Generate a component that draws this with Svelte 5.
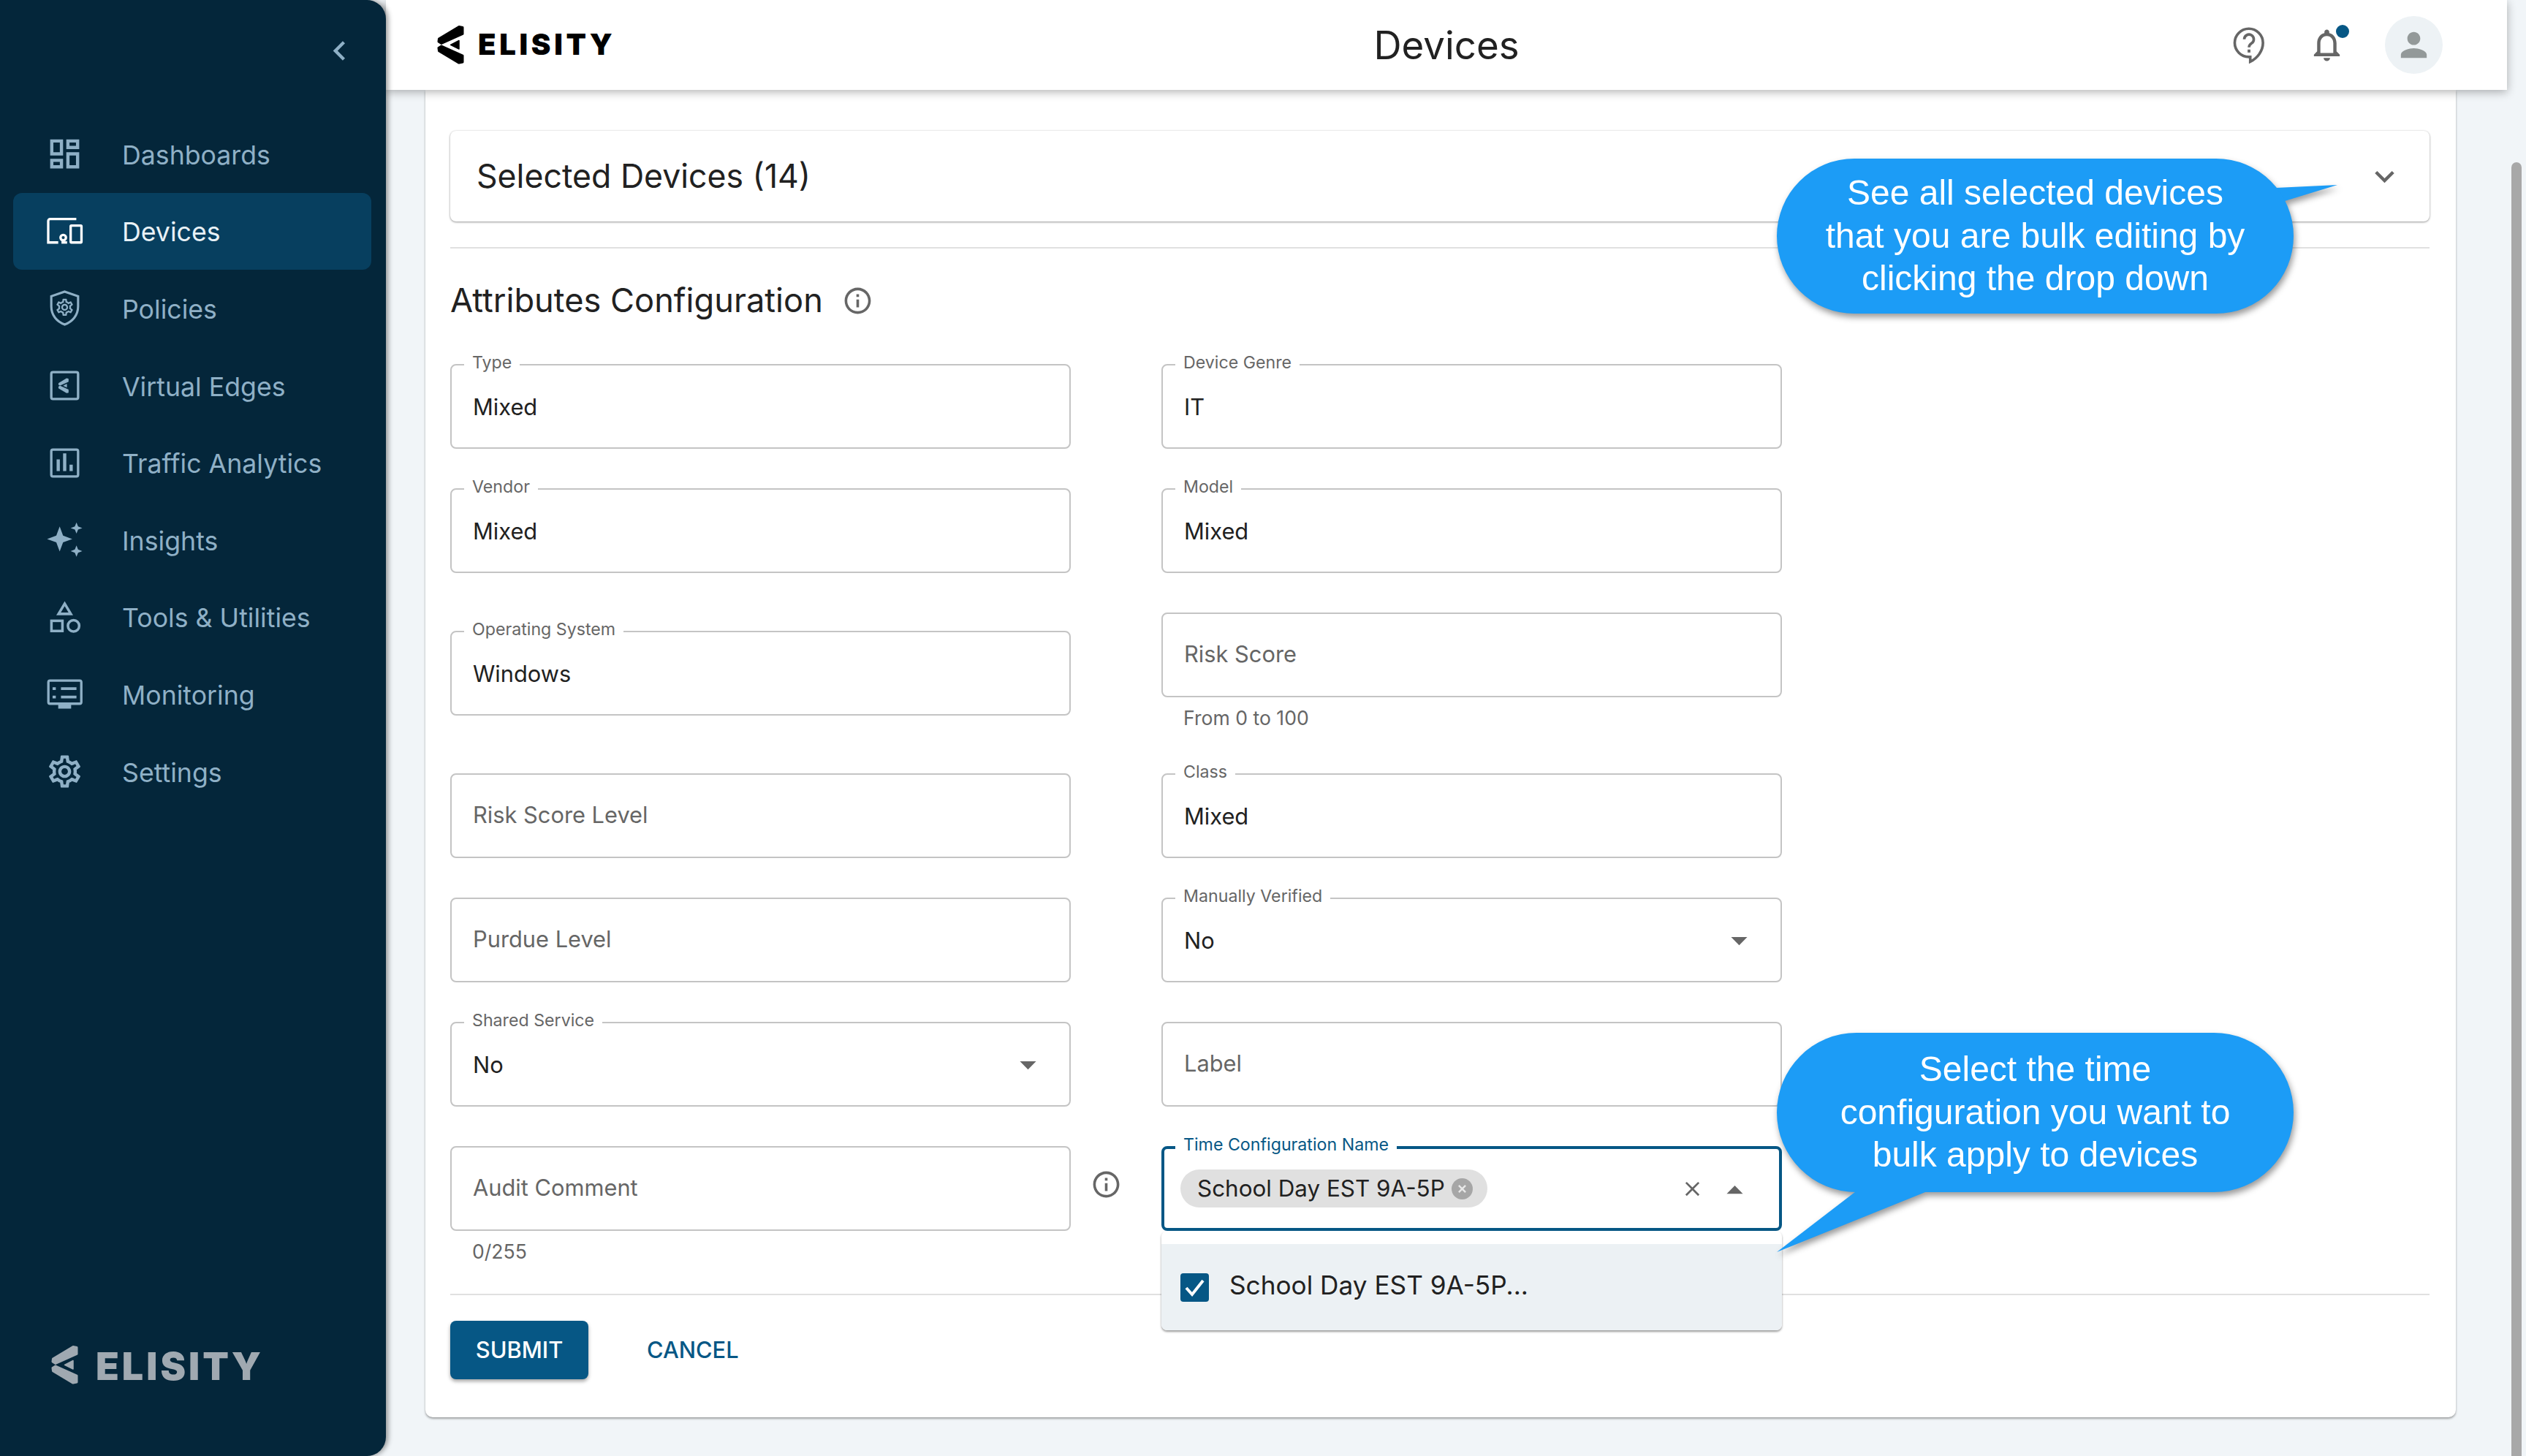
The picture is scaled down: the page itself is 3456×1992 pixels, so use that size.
<script>
  const settingsPath =
    "M19.43 12.98c.04-.32.07-.64.07-.98s-.03-.66-.07-.98l2.11-1.65c.19-.15.24-.42.12-.64l-2-3.46c-.12-.22-.39-.3-.61-.22l-2.49 1c-.52-.4-1.08-.73-1.69-.98l-.38-2.65C14.46 2.18 14.25 2 14 2h-4c-.25 0-.46.18-.49.42l-.38 2.65c-.61.25-1.17.59-1.69.98l-2.49-1c-.23-.09-.49 0-.61.22l-2 3.46c-.13.22-.07.49.12.64l2.11 1.65c-.04.32-.07.65-.07.98s.03.66.07.98l-2.11 1.65c-.19.15-.24.42-.12.64l2 3.46c.12.22.39.3.61.22l2.49-1c.52.4 1.08.73 1.69.98l.38 2.65c.03.24.24.42.49.42h4c.25 0 .46-.18.49-.42l.38-2.65c.61-.25 1.17-.59 1.69-.98l2.49 1c.23.09.49 0 .61-.22l2-3.46c.12-.22.07-.49-.12-.64l-2.11-1.65zm-1.98-1.71c.04.31.05.52.05.73 0 .21-.02.43-.05.73l-.14 1.13.89.7 1.08.84-.7 1.21-1.27-.51-1.04-.42-.9.68c-.43.32-.84.56-1.25.73l-1.06.43-.16 1.13-.2 1.35h-1.4l-.19-1.35-.16-1.13-1.06-.43c-.43-.18-.83-.41-1.23-.71l-.91-.7-1.06.43-1.27.51-.7-1.21 1.08-.84.89-.7-.14-1.13c-.03-.31-.05-.54-.05-.74s.02-.43.05-.73l.14-1.13-.89-.7-1.08-.84.7-1.21 1.27.51 1.04.42.9-.68c.43-.32.84-.56 1.25-.73l1.06-.43.16-1.13.2-1.35h1.39l.19 1.35.16 1.13 1.06.43c.43.18.83.41 1.23.71l.91.7 1.06-.43 1.27-.51.7 1.21-1.07.85-.89.7.14 1.13zM12 8c-2.21 0-4 1.79-4 4s1.79 4 4 4 4-1.79 4-4-1.79-4-4-4zm0 6c-1.1 0-2-.9-2-2s.9-2 2-2 2 .9 2 2-.9 2-2 2z";

  // the two wedge arms and the small triangle of the Elisity mark
  const logoMark = `<path d="M2.500 19L30 2.500L35 3.500V12.500L6 25.500L2 23ZM2.500 35.600L30 52.100L35 51.100V42.100L6 29.100L2 31.600Z" fill="currentColor" stroke="currentColor" stroke-width="3" stroke-linejoin="round"/><path d="M18.500 27.300L30 21.500V33Z" fill="currentColor" stroke="currentColor" stroke-width="1.500" stroke-linejoin="round"/>`;

  const nav = [
    {
      name: "Dashboards",
      icon: `<path fill="currentColor" d="M19 5v2h-4V5h4M9 5v6H5V5h4m10 8v6h-4v-6h4M9 17v2H5v-2h4M21 3h-8v6h8V3zM11 3H3v10h8V3zm10 8h-8v10h8V11zm-10 4H3v6h8v-6z"/>`
    },
    {
      name: "Devices",
      active: true,
      icon: `<g fill="none" stroke="currentColor" stroke-width="1.500"><path d="M19.200 4.400H3a1.200 1.200 0 0 0-1.200 1.200V18.900H8"/><circle cx="11.100" cy="15.900" r="1.700"/><path d="M10 18.900h3.500"/><rect x="15.700" y="8.400" width="6.700" height="10.500" rx=".4"/></g>`
    },
    {
      name: "Policies",
      icon: `<path fill="none" stroke="currentColor" stroke-width="1.400" d="M12 1.800L20.300 4.700V11C20.300 16.500 16.800 20.400 12 22.200C7.200 20.400 3.700 16.500 3.700 11V4.700Z"/><path fill="currentColor" transform="translate(5.700 5.200) scale(.525)" d="${settingsPath}"/>`
    },
    {
      name: "Virtual Edges",
      icon: `<rect x="3.700" y="3.700" width="16.600" height="16.600" rx="1" fill="none" stroke="currentColor" stroke-width="1.500"/><g transform="translate(8 7.300) scale(.175)">${logoMark}</g>`
    },
    {
      name: "Traffic Analytics",
      icon: `<rect x="3.700" y="3.700" width="16.600" height="16.600" rx="1" fill="none" stroke="currentColor" stroke-width="1.500"/><path fill="currentColor" d="M7 9.700h2V17H7zm4-3.700h2v11h-2zm4 7h2v4h-2z"/>`
    },
    {
      name: "Insights",
      icon: `<path fill="currentColor" d="M8.900 3.700L11 9.400L16.700 11.500L11 13.600L8.900 19.300L6.800 13.600L1.100 11.500L6.800 9.400ZM19.300 1.200L20.300 3.700L22.900 4.700L20.300 5.700L19.300 8.200L18.300 5.700L15.700 4.700L18.300 3.700ZM19.300 15.500L20.300 18L22.900 19L20.300 20L19.300 22.500L18.300 20L15.700 19L18.300 18Z"/>`
    },
    {
      name: "Tools & Utilities",
      icon: `<g fill="none" stroke="currentColor" stroke-width="1.600"><path d="M12 3.600L15.800 9.900H8.200Z"/><rect x="3.800" y="14.200" width="6.800" height="6.300"/><circle cx="17.500" cy="17.300" r="3.500"/></g>`
    },
    {
      name: "Monitoring",
      icon: `<rect x="1.900" y="3.700" width="20.400" height="14.300" rx="1" fill="none" stroke="currentColor" stroke-width="1.500"/><path fill="currentColor" d="M8 18.500h8V21H8zM4.500 7.800h2v1.700h-2zm5.200 0h9.600v1.700H9.700zM4.500 13h2v1.700h-2zm5.200 0h9.600v1.700H9.700z"/>`
    },
    {
      name: "Settings",
      icon: `<path fill="currentColor" d="${settingsPath}"/>`
    }
  ];

  const rows = [
    [{ label: "Type", value: "Mixed" }, { label: "Device Genre", value: "IT" }],
    [{ label: "Vendor", value: "Mixed" }, { label: "Model", value: "Mixed" }],
    [{ label: "Operating System", value: "Windows" }, { placeholder: "Risk Score", helper: "From 0 to 100" }],
    [{ placeholder: "Risk Score Level" }, { label: "Class", value: "Mixed" }],
    [{ placeholder: "Purdue Level" }, { label: "Manually Verified", value: "No", select: true }],
    [{ label: "Shared Service", value: "No", select: true }, { placeholder: "Label" }]
  ];
</script>

{#snippet infoIcon()}
  <svg class="info" viewBox="0 0 24 24"><path d="M11 7h2v2h-2zm0 4h2v6h-2zm1-9C6.480 2 2 6.480 2 12s4.480 10 10 10 10-4.480 10-10S17.520 2 12 2zm0 18c-4.410 0-8-3.590-8-8s3.590-8 8-8 8 3.590 8 8-3.590 8-8 8z"/></svg>
{/snippet}

{#snippet field(f)}
  <div class="cell" class:with-helper={f.helper}>
    <div class="field">
      {#if f.label}<span class="label">{f.label}</span>{/if}
      {#if f.value}<span class="value">{f.value}</span>{/if}
      {#if f.placeholder}<span class="placeholder">{f.placeholder}</span>{/if}
      {#if f.select}
        <svg class="arrow" viewBox="0 0 24 24"><path d="M7 10l5 5 5-5z"/></svg>
      {/if}
    </div>
    {#if f.helper}<div class="helper">{f.helper}</div>{/if}
  </div>
{/snippet}

<div class="app">
  <aside class="sidebar">
    <button class="collapse" aria-label="Collapse">
      <svg viewBox="0 0 24 24"><path d="M15.410 7.410L14 6l-6 6 6 6 1.410-1.410L10.830 12z"/></svg>
    </button>
    <nav>
      {#each nav as item}
        <div class="nav-item" class:active={item.active}>
          <svg viewBox="0 0 24 24">{@html item.icon}</svg>
          <span>{item.name}</span>
        </div>
      {/each}
    </nav>
    <div class="side-logo">
      <svg viewBox="0 0 37 54">{@html logoMark}</svg>
      <span>ELISITY</span>
    </div>
  </aside>

  <div class="main">
    <header>
      <div class="top-logo">
        <svg viewBox="0 0 37 54">{@html logoMark}</svg>
        <span>ELISITY</span>
      </div>
      <h1>Devices</h1>
      <div class="top-actions">
        <svg class="help" viewBox="0 0 24 24">
          <g fill="none" stroke="currentColor" stroke-width="1.500">
            <path d="M11.500 3C7.100 3 3.500 6.600 3.500 11s3.600 8 8 8h.8v2.700c4-2 7.200-6 7.200-10.700C19.500 6.600 15.900 3 11.500 3z"/>
            <path d="M8.900 9a2.700 2.700 0 1 1 4.100 2.300c-.9.600-1.400 1.100-1.400 2.300"/>
          </g>
          <rect x="10.800" y="14.800" width="1.600" height="1.700" fill="currentColor"/>
        </svg>
        <div class="bell">
          <svg viewBox="0 0 24 24"><path d="M12 22c1.100 0 2-.9 2-2h-4c0 1.100.9 2 2 2zm6-6v-5c0-3.070-1.630-5.640-4.500-6.320V4c0-.83-.67-1.500-1.500-1.500s-1.500.67-1.500 1.500v.68C7.640 5.360 6 7.920 6 11v5l-2 2v1h16v-1l-2-2zm-2 1H8v-6c0-2.480 1.510-4.500 4-4.500s4 2.020 4 4.500v6z"/></svg>
          <span class="dot"></span>
        </div>
        <div class="avatar">
          <svg viewBox="0 0 24 24"><path d="M12 12c2.210 0 4-1.790 4-4s-1.790-4-4-4-4 1.790-4 4 1.790 4 4 4zm0 2c-2.670 0-8 1.340-8 4v2h16v-2c0-2.660-5.330-4-8-4z"/></svg>
        </div>
      </div>
    </header>

    <div class="content">
      <section class="card">
        <div class="accordion">
          <span>Selected Devices (14)</span>
          <svg viewBox="0 0 24 24"><path d="M16.590 8.590L12 13.170 7.410 8.590 6 10l6 6 6-6z"/></svg>
        </div>
        <hr class="rule-top" />
        <h2>Attributes Configuration {@render infoIcon()}</h2>

        <div class="grid">
          {#each rows as row}
            {@render field(row[0])}
            {@render field(row[1])}
          {/each}

          <div class="cell with-helper start">
            <div class="field">
              <span class="placeholder">Audit Comment</span>
              <div class="audit-info">{@render infoIcon()}</div>
            </div>
            <div class="helper">0/255</div>
          </div>

          <div class="cell start">
            <div class="field focused">
              <span class="label">Time Configuration Name</span>
              <span class="chip">
                School Day EST 9A-5P
                <svg viewBox="0 0 24 24"><circle cx="12" cy="12" r="12"/><path d="M16.500 8.900L15.100 7.500 12 10.600 8.900 7.500 7.500 8.900 10.600 12 7.500 15.100 8.900 16.500 12 13.400 15.100 16.500 16.500 15.100 13.400 12z"/></svg>
              </span>
              <svg class="clear" viewBox="0 0 24 24"><path d="M19 6.410L17.590 5 12 10.590 6.410 5 5 6.410 10.590 12 5 17.590 6.410 19 12 13.410 17.590 19 19 17.590 13.410 12z"/></svg>
              <svg class="arrow up" viewBox="0 0 24 24"><path d="M7 15l5-5 5 5z"/></svg>
              <div class="menu">
                <div class="option">
                  <svg viewBox="0 0 39 39"><rect width="39" height="39" rx="4"/><path d="M8 20l8 9 15-19" fill="none" stroke="#fff" stroke-width="4"/></svg>
                  <span>School Day EST 9A-5P...</span>
                </div>
              </div>
            </div>
          </div>
        </div>

        <hr class="rule-bottom" />
        <div class="actions">
          <button class="submit">SUBMIT</button>
          <button class="cancel">CANCEL</button>
        </div>
      </section>
    </div>
  </div>

  <div class="scrollbar"><div class="thumb"></div></div>

  <div class="callout one">
    <svg viewBox="0 0 108 43"><path d="M23 10L107 6L35 28L15 34Z"/></svg>
    <div class="bubble">See all selected devices<br />that you are bulk editing by<br />clicking the drop down</div>
  </div>
  <div class="callout two">
    <svg viewBox="0 -4 213 86"><path d="M112 -4L0 82L213 -4Z"/></svg>
    <div class="bubble">Select the time<br />configuration you want to<br />bulk apply to devices</div>
  </div>
</div>

<style>
  :global(body) {
    margin: 0;
    background: #f1f5f8;
  }

  .app {
    position: relative;
    display: flex;
    width: 3456px;
    height: 1992px;
    overflow: hidden;
    font-family: Inter, "Liberation Sans", sans-serif;
    color: #212121;
  }

  /* sidebar */
  .sidebar {
    position: relative;
    z-index: 3;
    flex: 0 0 528px;
    display: flex;
    flex-direction: column;
    box-sizing: border-box;
    background: #04263a;
    border-radius: 0 26px 26px 0;
    box-shadow: 3px 0 7px rgba(0, 0, 0, 0.4);
  }

  .collapse {
    align-self: flex-end;
    width: 53px;
    height: 53px;
    margin: 43px 37px 62px 0;
    padding: 0;
    border: 0;
    background: none;
  }

  .collapse svg {
    display: block;
    fill: #8fb0c6;
  }

  .nav-item {
    display: flex;
    align-items: center;
    gap: 52px;
    height: 105.6px;
    margin: 0 20px 0 18px;
    padding-left: 44px;
    border-radius: 12px;
    font-size: 35.700px;
    color: #8fb0c6;
  }

  .nav-item span {
    padding-top: 2px;
  }

  .nav-item svg {
    flex: none;
    width: 53px;
    height: 53px;
  }

  .nav-item.active {
    background: #073f5f;
    color: #e8f1f6;
  }

  .nav-item.active svg {
    color: #fff;
  }

  .side-logo {
    display: flex;
    align-items: center;
    gap: 24px;
    margin: auto 0 96px 70px;
    color: #a0a9b1;
  }

  .side-logo svg {
    width: 37px;
    height: 54px;
  }

  .side-logo span {
    padding-top: 7px;
    font-size: 52px;
    font-weight: 900;
    letter-spacing: 4px;
    line-height: 1;
  }

  /* header */
  .main {
    flex: 1;
    min-width: 0;
    display: flex;
    flex-direction: column;
  }

  header {
    position: relative;
    z-index: 2;
    flex: 0 0 123px;
    display: flex;
    align-items: center;
    background: #fff;
    box-shadow: 0 3px 12px rgba(0, 0, 0, 0.3);
  }

  .top-logo {
    position: absolute;
    left: 70px;
    top: 34px;
    display: flex;
    align-items: center;
    gap: 19px;
    color: #000;
  }

  .top-logo svg {
    width: 37px;
    height: 54px;
  }

  .top-logo span {
    font-size: 40px;
    font-weight: 900;
    letter-spacing: 4.700px;
    line-height: 1;
  }

  h1 {
    flex: 1;
    margin: 0;
    text-align: center;
    font-size: 52.800px;
    font-weight: 400;
    color: #212121;
  }

  .top-actions {
    position: absolute;
    right: 88px;
    top: 22px;
    display: flex;
    align-items: flex-start;
    gap: 53px;
    color: #666;
  }

  .help {
    width: 58px;
    height: 58px;
    margin: 10px -3px 0 -2px;
  }

  .bell {
    position: relative;
    width: 53px;
    height: 53px;
    margin: 13px 0 0 0;
  }

  .bell svg {
    display: block;
    fill: currentColor;
  }

  .dot {
    position: absolute;
    left: 39px;
    top: -1px;
    width: 18px;
    height: 18px;
    border-radius: 50%;
    background: #065785;
  }

  .avatar {
    display: flex;
    align-items: center;
    justify-content: center;
    width: 79px;
    height: 79px;
    border-radius: 50%;
    background: #edf2f5;
  }

  .avatar svg {
    width: 53px;
    height: 53px;
    fill: #939999;
  }

  /* content */
  .content {
    flex: 1;
    min-height: 0;
    padding: 0 70px 0 54px;
  }

  .card {
    box-sizing: border-box;
    height: 1816px;
    padding: 56px 36px 0 34px;
    background: #fff;
    border-radius: 0 0 10px 10px;
    box-shadow: 0 2px 3px rgba(0, 0, 0, 0.35);
  }

  .accordion {
    display: flex;
    align-items: center;
    justify-content: space-between;
    box-sizing: border-box;
    height: 124px;
    padding: 0 35px 0 36px;
    border-radius: 8px;
    box-shadow: 0 1px 3px rgba(0, 0, 0, 0.4), 0 0 2px rgba(0, 0, 0, 0.08);
    font-size: 44.600px;
  }

  .accordion svg {
    width: 53px;
    height: 53px;
    fill: #666;
  }

  hr {
    height: 2px;
    margin: 0;
    border: 0;
    background: #e0e0e0;
  }

  .rule-top {
    margin-top: 35px;
  }

  h2 {
    display: flex;
    align-items: center;
    gap: 26px;
    height: 54px;
    margin: 44px 0 60px;
    font-size: 45.200px;
    font-weight: 400;
    line-height: 54px;
  }

  .info {
    width: 43px;
    height: 43px;
    fill: #666;
  }

  .grid {
    display: grid;
    grid-template-columns: 849px 849px;
    column-gap: 124px;
    row-gap: 54px;
    align-items: center;
  }

  .cell.start {
    align-self: start;
  }

  .cell.with-helper {
    padding-bottom: 8px;
  }

  .field {
    position: relative;
    display: flex;
    align-items: center;
    box-sizing: border-box;
    height: 116px;
    padding: 0 29px;
    border: 2px solid #c4c4c4;
    border-radius: 8px;
    font-size: 30.800px;
    color: #212121;
  }

  .label {
    position: absolute;
    left: 17px;
    top: -18px;
    padding: 0 11px;
    background: linear-gradient(transparent 50%, #fff 50%), linear-gradient(#fff, #fff);
    font-size: 23.200px;
    line-height: 28px;
    color: #666;
  }

  .placeholder {
    padding-bottom: 4px;
    color: #666;
  }

  .arrow {
    position: absolute;
    right: 30px;
    top: 30px;
    width: 53px;
    height: 53px;
    fill: #666;
  }

  .helper {
    margin: 14px 0 0 30px;
    font-size: 26.600px;
    line-height: 28px;
    color: #666;
  }

  .audit-info {
    position: absolute;
    left: 874px;
    top: 29px;
  }

  .audit-info :global(svg) {
    display: block;
  }

  .field.focused {
    padding: 0 22px;
    border: 4px solid #065785;
  }

  .focused .label {
    left: 15px;
    top: -20px;
    color: #065785;
  }

  .chip {
    display: flex;
    align-items: center;
    gap: 9px;
    height: 52px;
    padding: 0 20px 0 23px;
    border-radius: 26px;
    background: #e0e0e0;
    font-size: 31.400px;
    white-space: nowrap;
  }

  .chip svg {
    width: 29px;
    height: 29px;
    fill: #a6a6a6;
  }

  .chip svg path {
    fill: #e8e8e8;
  }

  .clear {
    position: absolute;
    left: 706px;
    top: 38px;
    width: 33px;
    height: 33px;
    fill: #666;
  }

  .arrow.up {
    right: 34px;
    top: 28px;
  }

  .menu {
    position: absolute;
    z-index: 1;
    left: -4px;
    right: -4px;
    top: 112px;
    padding-top: 18px;
    background: #fff;
    border-radius: 8px;
    box-shadow: 0 2px 3px rgba(0, 0, 0, 0.4);
  }

  .option {
    display: flex;
    align-items: center;
    gap: 28px;
    height: 118px;
    padding-left: 26px;
    background: #ecf1f4;
    border-radius: 0 0 8px 8px;
    font-size: 35.200px;
  }

  .option span {
    padding-bottom: 6px;
  }

  .option svg {
    width: 39px;
    height: 39px;
    fill: #065785;
  }

  .rule-bottom {
    margin-top: 36px;
  }

  .actions {
    display: flex;
    align-items: center;
    gap: 80px;
    margin-top: 35px;
  }

  button {
    padding-bottom: 2px;
    font-family: inherit;
  }

  .submit {
    width: 189px;
    height: 80px;
    padding: 0 0 2px;
    border: 0;
    border-radius: 8px;
    background: #065785;
    box-shadow: 0 3px 5px rgba(0, 0, 0, 0.35);
    color: #fff;
    font-size: 30.800px;
    font-weight: 500;
  }

  .cancel {
    padding: 0 0 2px;
    border: 0;
    background: none;
    color: #065785;
    font-size: 30.800px;
    font-weight: 500;
  }

  /* scrollbar */
  .scrollbar {
    flex: 0 0 26px;
    position: relative;
    background: #f1f5f8;
  }

  .thumb {
    position: absolute;
    left: 6px;
    right: 6px;
    top: 222px;
    bottom: 0;
    border-radius: 7px 7px 0 0;
    background: #a8a8a8;
  }

  /* callouts */
  .callout {
    position: absolute;
    z-index: 4;
    left: 2431px;
    width: 707px;
    filter: drop-shadow(2px 5px 4px rgba(0, 0, 0, 0.4));
  }

  .callout.one {
    top: 217px;
  }

  .callout.two {
    top: 1413px;
  }

  .callout svg {
    position: absolute;
    fill: #1c9cf6;
  }

  .callout.one svg {
    left: 660px;
    top: 30px;
    width: 108px;
    height: 43px;
  }

  .callout.two svg {
    left: 0;
    top: 214px;
    width: 213px;
    height: 86px;
  }

  .bubble {
    position: relative;
    display: flex;
    align-items: center;
    justify-content: center;
    box-sizing: border-box;
    height: 212px;
    border-radius: 106px;
    background: #1c9cf6;
    font-family: "Liberation Sans", Arial, sans-serif;
    font-size: 48px;
    line-height: 58.500px;
    color: #fff;
    text-align: center;
  }

  .two .bubble {
    height: 218px;
    border-radius: 109px;
  }
</style>
